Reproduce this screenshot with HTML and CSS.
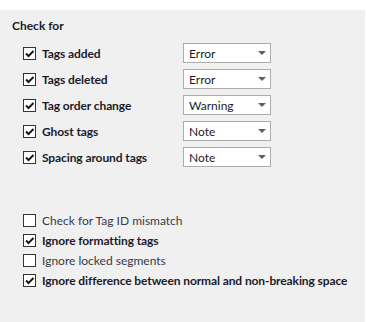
FILE: index.html
```html
<!DOCTYPE html>
<html>
<head>
<meta charset="utf-8">
<link rel="stylesheet" href="styles.css">
</head>
<body>
<div class="panel">
  <div class="title">Check for</div>
  <div class="grid">
    <label class="opt bold"><span class="cb on"><svg viewBox="0 0 11 11"><path d="M2 5.5 L4.5 8 L9.5 3"/></svg></span>Tags added</label>
    <div class="select"><span>Error</span><i class="arrow"></i></div>
    <label class="opt bold"><span class="cb on"><svg viewBox="0 0 11 11"><path d="M2 5.5 L4.5 8 L9.5 3"/></svg></span>Tags deleted</label>
    <div class="select"><span>Error</span><i class="arrow"></i></div>
    <label class="opt bold"><span class="cb on"><svg viewBox="0 0 11 11"><path d="M2 5.5 L4.5 8 L9.5 3"/></svg></span>Tag order change</label>
    <div class="select"><span>Warning</span><i class="arrow"></i></div>
    <label class="opt bold"><span class="cb on"><svg viewBox="0 0 11 11"><path d="M2 5.5 L4.5 8 L9.5 3"/></svg></span>Ghost tags</label>
    <div class="select"><span>Note</span><i class="arrow"></i></div>
    <label class="opt bold"><span class="cb on"><svg viewBox="0 0 11 11"><path d="M2 5.5 L4.5 8 L9.5 3"/></svg></span>Spacing around tags</label>
    <div class="select"><span>Note</span><i class="arrow"></i></div>
  </div>
  <div class="list">
    <label class="opt"><span class="cb"></span>Check for Tag ID mismatch</label>
    <label class="opt bold"><span class="cb on"><svg viewBox="0 0 11 11"><path d="M2 5.5 L4.5 8 L9.5 3"/></svg></span>Ignore formatting tags</label>
    <label class="opt"><span class="cb"></span>Ignore locked segments</label>
    <label class="opt bold"><span class="cb on"><svg viewBox="0 0 11 11"><path d="M2 5.5 L4.5 8 L9.5 3"/></svg></span>Ignore difference between normal and non-breaking space</label>
  </div>
</div>
</body>
</html>
```
FILE: styles.css
```css
html, body {
  margin: 0;
  padding: 0;
  background: #ffffff;
}
body {
  font-family: "Lato", "Noto Sans", sans-serif;
  font-size: 12px;
  color: #1b1b2a;
}
.panel {
  margin-top: 10px;
  width: 365px;
  height: 312px;
  background: #f0f0f0;
  box-sizing: border-box;
  padding: 8px 0 0 12px;
}
.title {
  height: 16px;
  line-height: 16px;
  font-weight: 700;
}
.grid {
  margin-top: 9px;
  padding-left: 11px;
  display: grid;
  grid-template-columns: 160px 88px;
  grid-auto-rows: 20px;
  row-gap: 6px;
}
.list {
  margin-top: 43px;
  padding-left: 11px;
  display: flex;
  flex-direction: column;
}
.opt {
  display: flex;
  align-items: center;
  height: 20px;
  white-space: nowrap;
  color: #3a3a48;
}
.opt.bold {
  font-weight: 700;
  color: #1b1b2a;
  letter-spacing: -0.1px;
}
.cb {
  width: 13px;
  height: 13px;
  box-sizing: border-box;
  border: 1px solid #333333;
  background: #ffffff;
  margin-right: 6px;
  flex: none;
  display: flex;
  letter-spacing: 0;
}
.cb svg {
  width: 11px;
  height: 11px;
}
.cb svg path {
  fill: none;
  stroke: #1a1a1a;
  stroke-width: 2;
}
.select {
  box-sizing: border-box;
  height: 20px;
  border: 1px solid #acacac;
  background: #ffffff;
  display: flex;
  align-items: center;
  justify-content: space-between;
  padding: 0 4px 0 5px;
  color: #1b1b2a;
}
.arrow {
  width: 0;
  height: 0;
  border-left: 4px solid transparent;
  border-right: 4px solid transparent;
  border-top: 4px solid #606060;
}
```
